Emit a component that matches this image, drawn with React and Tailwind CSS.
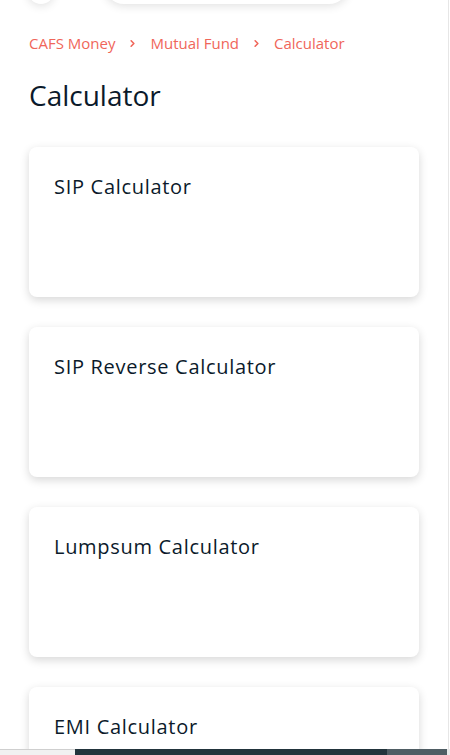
import React from "react";

const calculators = [
  "SIP Calculator",
  "SIP Reverse Calculator",
  "Lumpsum Calculator",
  "EMI Calculator",
];

function Chevron() {
  return (
    <svg
      className="w-[9px] h-[9px] mx-[13px]"
      viewBox="0 0 10 10"
      fill="none"
      stroke="currentColor"
      strokeWidth="1.8"
      strokeLinecap="round"
      strokeLinejoin="round"
    >
      <path d="M3.5 2L6.5 5L3.5 8" />
    </svg>
  );
}

export default function App() {
  return (
    <div className="relative w-[450px] h-[755px] overflow-hidden bg-white font-['Open_Sans',sans-serif]">
      <div className="w-[449px] h-full border-r border-[#e6e6e6] overflow-hidden">
        {/* header scrolled out of view, only its shadow shows */}
        <div className="flex items-end gap-[50px] px-[28px] -mt-[40px] h-[44px]">
          <div className="w-[26px] h-[40px] rounded-full bg-white shadow-[0_2px_10px_rgba(0,0,0,0.12)]" />
          <div className="w-[245px] h-[40px] rounded-[20px] bg-white shadow-[0_2px_10px_rgba(0,0,0,0.12)]" />
        </div>

        <nav className="flex items-center px-[29px] mt-[28px] text-[15px] leading-[22px] text-[#f0665a]">
          <span>CAFS Money</span>
          <Chevron />
          <span>Mutual Fund</span>
          <Chevron />
          <span>Calculator</span>
        </nav>

        <h1 className="px-[29px] mt-[22px] text-[28px] leading-[38px] text-[#0b1a2b]">
          Calculator
        </h1>

        <div className="flex flex-col gap-[30px] px-[29px] mt-[33px]">
          {calculators.map((name) => (
            <div
              key={name}
              className="h-[150px] shrink-0 rounded-[8px] bg-white px-[25px] pt-[27px] shadow-[0_3px_10px_rgba(0,0,0,0.16)]"
            >
              <h2 className="text-[20px] leading-[26px] tracking-[0.7px] text-[#0b1a2b]">
                {name}
              </h2>
            </div>
          ))}
        </div>
      </div>

      <div className="absolute bottom-0 left-0 right-0 flex h-[6px]">
        <div className="w-[75px] bg-[#f1f1f1] border-t border-[#cfcfcf]" />
        <div className="w-[312px] bg-[#22343c]" />
        <div className="w-[60px] bg-[#4f5d64]" />
        <div className="flex-1 bg-[#e9e9e9]" />
      </div>
    </div>
  );
}
